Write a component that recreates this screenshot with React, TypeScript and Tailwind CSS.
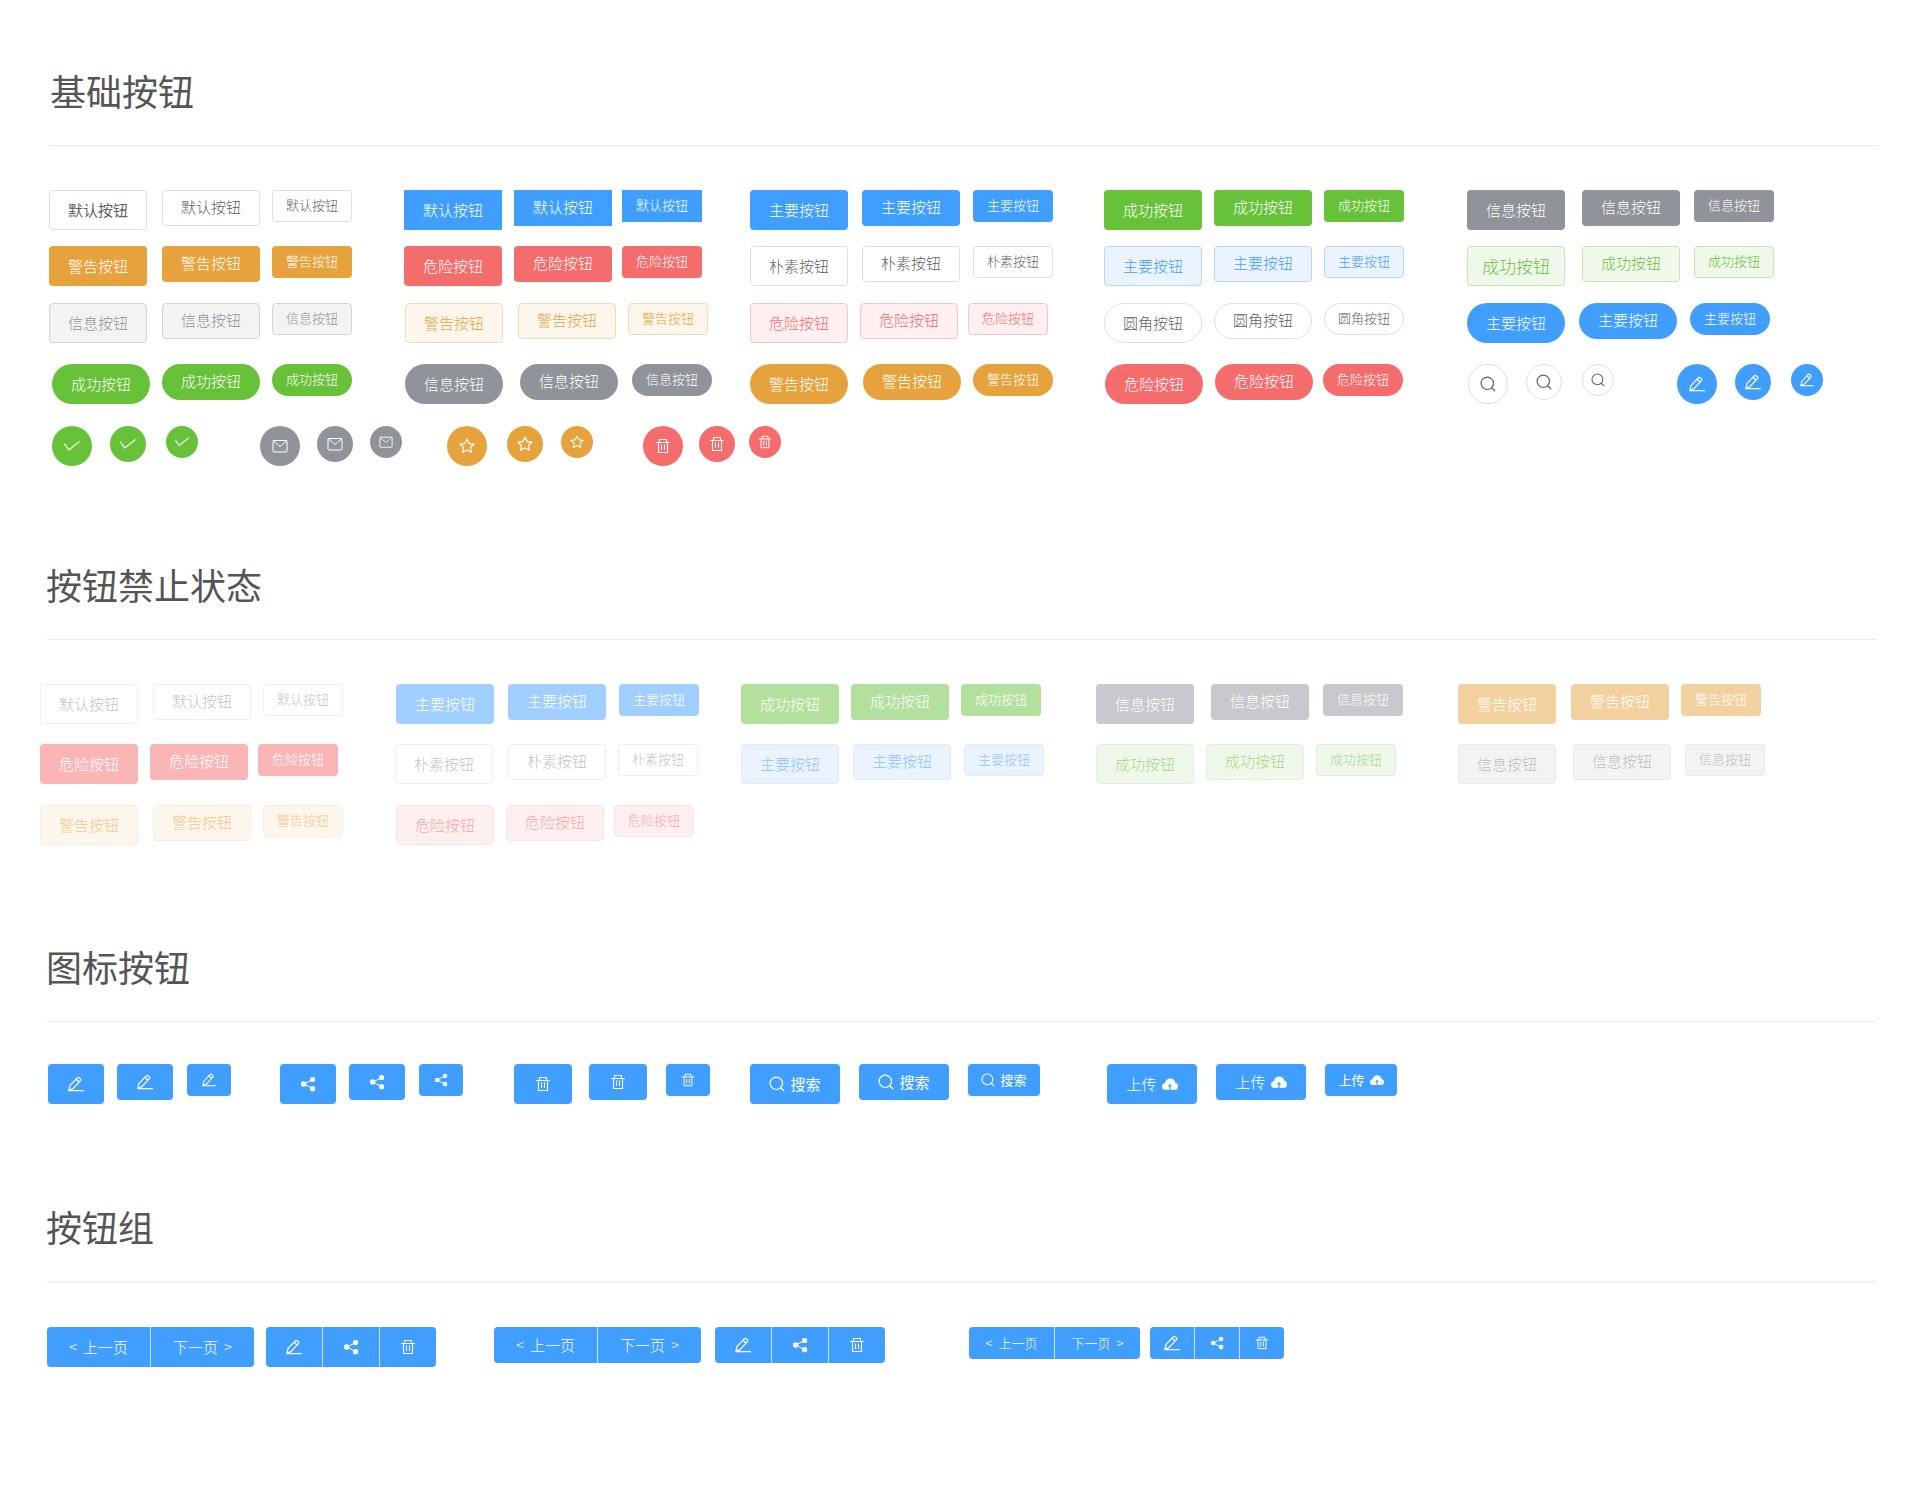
import type { ReactNode } from 'react';

type Size = 'lg' | 'md' | 'sm';
type Kind = 'default' | 'primary' | 'success' | 'info' | 'warning' | 'danger';

const SIZES: Size[] = ['lg', 'md', 'sm'];

const TEXT_SIZE: Record<Size, string> = {
  lg: 'h-10 w-[98px] text-[15px]',
  md: 'h-9 w-[98px] pb-0.5 text-[15px]',
  sm: 'h-8 w-20 pb-0.5 text-[13px]',
};

/* Space before the medium and the small button of each kind. */
const GAPS: Record<Kind, Record<Size, string>> = {
  default: { lg: '', md: 'ml-[15px]', sm: 'ml-3' },
  primary: { lg: '', md: 'ml-3.5', sm: 'ml-[13px]' },
  success: { lg: '', md: 'ml-3', sm: 'ml-3' },
  info: { lg: '', md: 'ml-[17px]', sm: 'ml-3.5' },
  warning: { lg: '', md: 'ml-[15px]', sm: 'ml-3' },
  danger: { lg: '', md: 'ml-3', sm: 'ml-2.5' },
};

const SOLID: Record<Kind, string> = {
  default: 'border border-[#dcdfe6] bg-white text-[#606266]',
  primary: 'bg-[#409eff] text-white',
  success: 'bg-[#67c23a] text-white',
  info: 'bg-[#909399] text-white',
  warning: 'bg-[#e6a23c] text-white',
  danger: 'bg-[#f56c6c] text-white',
};

const PLAIN: Record<Kind, string> = {
  default: 'border border-[#dcdfe6] bg-white text-[#606266]',
  primary: 'border border-[#b3d8ff] bg-[#ebf3ff] text-[#409eff]',
  success: 'border border-[#c2e7b0] bg-[#f0f8eb] text-[#67c23a]',
  info: 'border border-[#d3d4d6] bg-[#f3f3f3] text-[#909399]',
  warning: 'border border-[#f5dab1] bg-[#fdf6ec] text-[#e6a23c]',
  danger: 'border border-[#fbc4c4] bg-[#feeff0] text-[#f56c6c]',
};

const SOLID_OFF: Record<Kind, string> = {
  default: 'border border-[#ebeef5] bg-white text-[#c0c4cc]',
  primary: 'bg-[#a0cfff] text-white',
  success: 'bg-[#b3e19d] text-white',
  info: 'bg-[#c8c9cc] text-white',
  warning: 'bg-[#f3d19e] text-white',
  danger: 'bg-[#fab6b6] text-white',
};

const PLAIN_OFF: Record<Kind, string> = {
  default: 'border border-[#ebeef5] bg-white text-[#c0c4cc]',
  primary: 'border border-[#d9ecff] bg-[#ebf3ff] text-[#8cc5ff]',
  success: 'border border-[#e1f3d8] bg-[#f0f8eb] text-[#a4da89]',
  info: 'border border-[#e9e9eb] bg-[#f3f3f3] text-[#bcbec2]',
  warning: 'border border-[#faecd8] bg-[#fdf6ec] text-[#f0c78a]',
  danger: 'border border-[#fde2e2] bg-[#feeff0] text-[#f9a7a7]',
};

type TrioProps = {
  label: string;
  kind: Kind;
  tone: Record<Kind, string>;
  shape?: string;
  first?: string;
  disabled?: boolean;
};

function Trio({ label, kind, tone, shape = 'rounded', first = '', disabled }: TrioProps) {
  return (
    <div className="flex items-start">
      {SIZES.map((s) => (
        <button
          key={s}
          type="button"
          disabled={disabled}
          className={`flex shrink-0 items-center justify-center whitespace-nowrap font-light ${TEXT_SIZE[s]} ${GAPS[kind][s]} ${tone[kind]} ${shape} ${s === 'lg' ? first : ''}`}
        >
          {label}
        </button>
      ))}
    </div>
  );
}

type IconProps = { className?: string };

const LINE = { fill: 'none', stroke: 'currentColor', strokeLinecap: 'round', strokeLinejoin: 'round' } as const;

function CheckIcon({ className }: IconProps) {
  return (
    <svg viewBox="0 0 16 16" className={className} aria-hidden="true" {...LINE} strokeWidth={1.2}>
      <path d="M.7 6.2 4.8 12 15.3 3.6" />
    </svg>
  );
}

function MailIcon({ className }: IconProps) {
  return (
    <svg viewBox="0 0 16 16" className={className} aria-hidden="true" {...LINE}>
      <rect x="1" y="2.5" width="14" height="11.5" rx="1" />
      <path d="m1.4 2.9 6.6 5.6 6.6-5.6" />
    </svg>
  );
}

function StarIcon({ className }: IconProps) {
  return (
    <svg viewBox="0 0 16 16" className={className} aria-hidden="true" {...LINE} strokeWidth={1.3}>
      <path d="M8 1.2 10.1 5.5l4.8.7-3.5 3.3.9 4.8L8 12l-4.3 2.3.9-4.8L1.1 6.2l4.8-.7Z" />
    </svg>
  );
}

function TrashIcon({ className }: IconProps) {
  return (
    <svg viewBox="0 0 16 16" className={className} aria-hidden="true" {...LINE} strokeWidth={1.1} strokeLinecap="butt" strokeLinejoin="miter">
      <path d="M1 4.5h14M4.500 4.500v-3h7v3M3.500 4.500v10h9v-10M6.500 6.500v5.500M9.500 6.500v5.500" />
    </svg>
  );
}

function SearchIcon({ className }: IconProps) {
  return (
    <svg viewBox="0 0 16 16" className={className} aria-hidden="true" {...LINE} strokeWidth={1.2}>
      <circle cx="7.3" cy="7.3" r="6.2" />
      <path d="m11.8 12 3 2.8" />
    </svg>
  );
}

function EditIcon({ className }: IconProps) {
  return (
    <svg viewBox="0 0 16 16" className={className} aria-hidden="true" {...LINE} strokeWidth={1.2}>
      <path d="M.6 14.6h14.8M1 14.3l.9-4.6L9.200 1.800q.9-.9 1.900-.1l1.300 1q.9.9 0 1.900L5 12.600ZM8 3.300l3 2.700" />
    </svg>
  );
}

function ShareIcon({ className }: IconProps) {
  return (
    <svg viewBox="0 0 16 16" className={className} aria-hidden="true" fill="currentColor">
      <circle cx="3.6" cy="8" r="2.7" />
      <circle cx="12.6" cy="3.5" r="2.6" />
      <circle cx="12.6" cy="12.7" r="2.6" />
      <path d="M12.6 3.8 3.6 8l9 4.6" fill="none" stroke="currentColor" strokeWidth="1" />
    </svg>
  );
}

function CloudIcon({ className }: IconProps) {
  return (
    <svg viewBox="0 0 16 16" className={className} aria-hidden="true" fill="currentColor">
      <path d="M3.4 13.8A3.4 3.4 0 0 1 0 10.400 3.200 3.200 0 0 1 2.900 7.200C3.500 4.300 5.500 2.500 8.200 2.500c2.700 0 4.700 1.700 5.100 4.300A3.500 3.500 0 0 1 16 10.300a3.400 3.400 0 0 1-3.400 3.500H8.600v-3.400h1.600L8 7.800l-2.200 2.600h1.600v3.400Z" />
    </svg>
  );
}

const ROUND_SIZE: Record<Size, string> = { lg: 'size-10', md: 'size-9', sm: 'size-8' };
const ICON_SIZE: Record<Size, string> = { lg: 'size-4', md: 'size-4', sm: 'size-3.5' };

type Icon = (props: IconProps) => ReactNode;

type RoundTrioProps = { Icon: Icon; name: string; tone: string; gaps: [string, string] };

function RoundTrio({ Icon, name, tone, gaps }: RoundTrioProps) {
  const lead: Record<Size, string> = { lg: '', md: gaps[0], sm: gaps[1] };
  return (
    <div className="flex items-start">
      {SIZES.map((s) => (
        <button
          key={s}
          type="button"
          aria-label={name}
          className={`flex shrink-0 items-center justify-center rounded-full ${ROUND_SIZE[s]} ${lead[s]} ${tone}`}
        >
          <Icon className={ICON_SIZE[s]} />
        </button>
      ))}
    </div>
  );
}

type BlueTrioProps = {
  gaps: [string, string];
  widths: [string, string];
  name?: string;
  render: (s: Size) => ReactNode;
};

const BAR_HEIGHT: Record<Size, string> = {
  lg: 'h-10 text-[15px]',
  md: 'h-9 text-[15px]',
  sm: 'h-8 text-[13px]',
};

function BlueTrio({ gaps, widths, name, render }: BlueTrioProps) {
  const lead: Record<Size, string> = { lg: '', md: gaps[0], sm: gaps[1] };
  return (
    <div className="flex items-start">
      {SIZES.map((s) => (
        <button
          key={s}
          type="button"
          aria-label={name}
          className={`flex shrink-0 items-center justify-center gap-[5px] whitespace-nowrap rounded bg-[#409eff] text-white ${BAR_HEIGHT[s]} ${lead[s]} ${s === 'sm' ? widths[1] : widths[0]}`}
        >
          {render(s)}
        </button>
      ))}
    </div>
  );
}

function ButtonGroup({ size }: { size: Size }) {
  const page: Record<Size, string> = { lg: 'w-[103px]', md: 'w-[103px]', sm: 'w-[85px]' };
  const cell: Record<Size, string> = { lg: 'w-14', md: 'w-14', sm: 'w-[44px]' };
  const gap: Record<Size, string> = { lg: 'gap-3', md: 'gap-3.5', sm: 'gap-2.5' };
  const part = 'flex items-center justify-center gap-1.5 whitespace-nowrap bg-[#409eff]';
  return (
    <div className={`flex items-start font-light text-white ${gap[size]}`}>
      <div className={`flex gap-px overflow-hidden rounded bg-[#c6e2ff] ${BAR_HEIGHT[size]}`}>
        <button type="button" className={`${part} ${page[size]}`}>
          <span>&lt;</span>
          <span>上一页</span>
        </button>
        <button type="button" className={`${part} ${page[size]}`}>
          <span>下一页</span>
          <span>&gt;</span>
        </button>
      </div>
      <div className={`flex gap-px overflow-hidden rounded bg-[#c6e2ff] ${BAR_HEIGHT[size]}`}>
        <button type="button" aria-label="编辑" className={`${part} ${cell[size]}`}>
          <EditIcon className="size-4" />
        </button>
        <button type="button" aria-label="分享" className={`${part} ${cell[size]}`}>
          <ShareIcon className={ICON_SIZE[size]} />
        </button>
        <button type="button" aria-label="删除" className={`${part} ${cell[size]}`}>
          <TrashIcon className={ICON_SIZE[size]} />
        </button>
      </div>
    </div>
  );
}

function Title({ children, rule }: { children: string; rule: string }) {
  return (
    <div className={`pb-[35px] ${rule}`}>
      <h2 className="text-4xl text-[#555]">{children}</h2>
    </div>
  );
}

const PILL = 'rounded-[20px]';

export default function App() {
  return (
    <main
      className="min-h-screen overflow-x-auto bg-white pb-[136px] pt-[70px]"
      style={{ fontFamily: '"Noto Sans CJK SC", "Liberation Sans", sans-serif' }}
    >
      <section>
        <div className="ml-[50px] mr-[45px]">
          <Title rule="border-b border-[#e6e6e6]">基础按钮</Title>
        </div>
        <div className="ml-[49px] mr-[45px] mt-11">
          <div className="grid grid-cols-[355fr_346fr_354fr_363fr_412fr]">
            <Trio label="默认按钮" kind="default" tone={SOLID} first="font-normal!" />
            <Trio label="默认按钮" kind="danger" tone={{ ...SOLID, danger: SOLID.primary }} shape="rounded-none" />
            <Trio label="主要按钮" kind="primary" tone={SOLID} />
            <Trio label="成功按钮" kind="success" tone={SOLID} />
            <Trio label="信息按钮" kind="info" tone={SOLID} />
          </div>
          <div className="mt-4 grid grid-cols-[355fr_346fr_354fr_363fr_412fr]">
            <Trio label="警告按钮" kind="warning" tone={SOLID} />
            <Trio label="危险按钮" kind="danger" tone={SOLID} />
            <Trio label="朴素按钮" kind="primary" tone={{ ...PLAIN, primary: PLAIN.default }} />
            <Trio label="主要按钮" kind="success" tone={{ ...PLAIN, success: PLAIN.primary }} />
            <Trio label="成功按钮" kind="info" tone={{ ...PLAIN, info: PLAIN.success }} first="text-[17px]!" />
          </div>
          <div className="mt-[17px] grid grid-cols-[356fr_345fr_354fr_363fr_412fr]">
            <Trio label="信息按钮" kind="default" tone={{ ...PLAIN, default: PLAIN.info }} />
            <Trio label="警告按钮" kind="warning" tone={PLAIN} />
            <Trio label="危险按钮" kind="danger" tone={PLAIN} />
            <Trio label="圆角按钮" kind="success" tone={{ ...SOLID, success: SOLID.default }} shape={PILL} />
            <Trio label="主要按钮" kind="primary" tone={SOLID} shape={PILL} />
          </div>
        </div>
        <div className="ml-[52px] mr-[45px] mt-[21px]">
          <div className="grid grid-cols-[353fr_345fr_355fr_363fr_411fr]">
            <Trio label="成功按钮" kind="success" tone={SOLID} shape={PILL} />
            <Trio label="信息按钮" kind="info" tone={SOLID} shape={PILL} />
            <Trio label="警告按钮" kind="warning" tone={SOLID} shape={PILL} />
            <Trio label="危险按钮" kind="danger" tone={SOLID} shape={PILL} />
            <div className="flex gap-[63px]">
              <RoundTrio Icon={SearchIcon} name="搜索" tone={SOLID.default} gaps={['ml-[18px]', 'ml-5']} />
              <RoundTrio Icon={EditIcon} name="编辑" tone={SOLID.primary} gaps={['ml-[18px]', 'ml-5']} />
            </div>
          </div>
          <div className="mt-[22px] grid grid-cols-[208fr_187fr_196fr_1236fr]">
            <RoundTrio Icon={CheckIcon} name="确认" tone={SOLID.success} gaps={['ml-[18px]', 'ml-5']} />
            <RoundTrio Icon={MailIcon} name="邮件" tone={SOLID.info} gaps={['ml-[17px]', 'ml-[17px]']} />
            <RoundTrio Icon={StarIcon} name="收藏" tone={SOLID.warning} gaps={['ml-5', 'ml-[18px]']} />
            <RoundTrio Icon={TrashIcon} name="删除" tone={SOLID.danger} gaps={['ml-4', 'ml-3.5']} />
          </div>
        </div>
      </section>

      <section className="mt-[98px]">
        <div className="ml-[46px] mr-12">
          <Title rule="border-b border-[#ebebeb]">按钮禁止状态</Title>
        </div>
        <div className="ml-10 mr-12 mt-11">
          <div className="grid grid-cols-[356fr_345fr_355fr_362fr_418fr]">
            <Trio disabled label="默认按钮" kind="default" tone={SOLID_OFF} />
            <Trio disabled label="主要按钮" kind="primary" tone={SOLID_OFF} />
            <Trio disabled label="成功按钮" kind="success" tone={SOLID_OFF} />
            <Trio disabled label="信息按钮" kind="info" tone={SOLID_OFF} />
            <Trio disabled label="警告按钮" kind="warning" tone={SOLID_OFF} />
          </div>
          <div className="mt-5 grid grid-cols-[355fr_346fr_355fr_362fr_418fr]">
            <Trio disabled label="危险按钮" kind="danger" tone={SOLID_OFF} />
            <Trio disabled label="朴素按钮" kind="default" tone={PLAIN_OFF} />
            <Trio disabled label="主要按钮" kind="primary" tone={PLAIN_OFF} />
            <Trio disabled label="成功按钮" kind="success" tone={PLAIN_OFF} />
            <Trio disabled label="信息按钮" kind="info" tone={PLAIN_OFF} />
          </div>
          <div className="mt-[21px] grid grid-cols-[356fr_345fr_355fr_362fr_418fr]">
            <Trio disabled label="警告按钮" kind="warning" tone={PLAIN_OFF} />
            <Trio disabled label="危险按钮" kind="danger" tone={PLAIN_OFF} />
          </div>
        </div>
      </section>

      <section className="mt-[101px]">
        <div className="ml-[46px] mr-12">
          <Title rule="border-b border-[#ebebeb]">图标按钮</Title>
        </div>
        <div className="ml-12 mr-12 mt-[42px] grid grid-cols-[232fr_234fr_236fr_357fr_769fr]">
          <BlueTrio name="编辑" gaps={['ml-[13px]', 'ml-3.5']} widths={['w-14', 'w-[44px]']} render={(s) => <EditIcon className={ICON_SIZE[s]} />} />
          <BlueTrio name="分享" gaps={['ml-[13px]', 'ml-3.5']} widths={['w-14', 'w-[44px]']} render={(s) => <ShareIcon className={ICON_SIZE[s]} />} />
          <BlueTrio name="删除" gaps={['ml-[17px]', 'ml-[19px]']} widths={['w-[58px]', 'w-[44px]']} render={(s) => <TrashIcon className={ICON_SIZE[s]} />} />
          <BlueTrio
            gaps={['ml-[19px]', 'ml-[19px]']}
            widths={['w-[90px]', 'w-[72px]']}
            render={(s) => (
              <>
                <SearchIcon className={ICON_SIZE[s]} />
                <span>搜索</span>
              </>
            )}
          />
          <BlueTrio
            gaps={['ml-[19px]', 'ml-[19px]']}
            widths={['w-[90px]', 'w-[72px]']}
            render={(s) => (
              <>
                <span className={s === 'sm' ? 'font-normal' : 'font-light'}>上传</span>
                <CloudIcon className={ICON_SIZE[s]} />
              </>
            )}
          />
        </div>
      </section>

      <section className="mt-[102px]">
        <div className="ml-[46px] mr-12">
          <Title rule="border-b-2 border-[#f2f2f2]">按钮组</Title>
        </div>
        <div className="ml-[47px] mr-12 mt-11 grid grid-cols-[447fr_475fr_907fr]">
          <ButtonGroup size="lg" />
          <ButtonGroup size="md" />
          <ButtonGroup size="sm" />
        </div>
      </section>
    </main>
  );
}
